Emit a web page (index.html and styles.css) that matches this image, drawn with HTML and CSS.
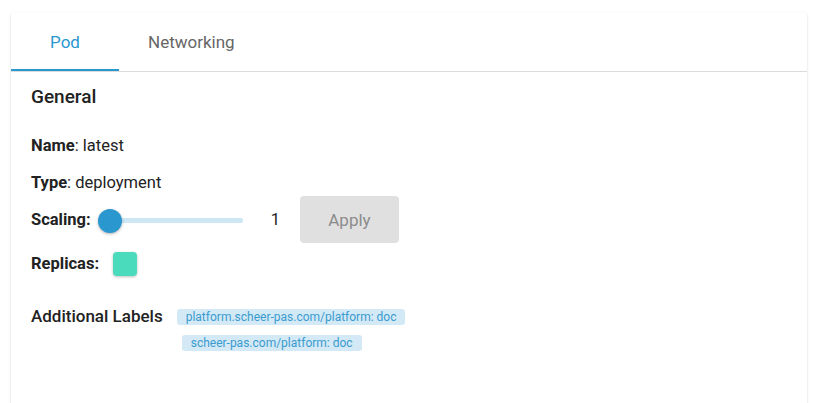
FILE: index.html
```html
<!DOCTYPE html>
<html lang="en">
  <head>
    <meta charset="UTF-8" />
    <meta name="viewport" content="width=device-width, initial-scale=1.0" />
    <title>Pod details</title>
    <link rel="stylesheet" href="styles.css">
  </head>
  <body>
    <div class="card">
      <div class="tabs">
        <div class="tab active">Pod</div>
        <div class="tab">Networking</div>
      </div>

      <div class="content">
        <h2>General</h2>

        <div class="row name-row"><b>Name</b>: latest</div>
        <div class="row type-row"><b>Type</b>: deployment</div>

        <div class="row scaling-row">
          <b>Scaling:</b>
          <div class="slider">
            <div class="track"></div>
            <div class="thumb"></div>
          </div>
          <span class="count">1</span>
          <button type="button" class="apply" disabled>Apply</button>
        </div>

        <div class="row replicas-row">
          <b>Replicas:</b>
          <span class="replica"></span>
        </div>

        <div class="labels-row">
          <span class="labels-title">Additional Labels</span>
          <div class="chips">
            <span class="chip">platform.scheer-pas.com/platform: doc</span>
            <span class="chip second">scheer-pas.com/platform: doc</span>
          </div>
        </div>
      </div>
    </div>
  </body>
</html>
```

FILE: styles.css
```css
* {
  margin: 0;
  padding: 0;
  box-sizing: border-box;
}
body {
  font-family: Roboto, "Liberation Sans", Arial, sans-serif;
  background-color: #fff;
  color: #222;
  padding: 13px 10px 0 11px;
}
.card {
  height: 400px;
  background-color: #fff;
  border-radius: 2px;
  box-shadow: 0 2px 1px -1px rgba(0, 0, 0, 0.2), 0 1px 1px 0 rgba(0, 0, 0, 0.14),
    0 1px 3px 0 rgba(0, 0, 0, 0.12);
}
.tabs {
  display: flex;
  height: 59px;
  border-bottom: 1px solid #dcdcdc;
}
.tab {
  display: flex;
  align-items: center;
  justify-content: center;
  height: 58px;
  padding: 0 29px;
  font-size: 17px;
  color: #666;
}
.tab.active {
  width: 108px;
  color: #2b97cf;
  border-bottom: 2px solid #2b97cf;
  padding-top: 2px;
}
.content {
  padding: 13px 20px 0;
}
h2 {
  font-size: 19px;
  font-weight: 500;
  line-height: 24px;
  color: #222;
}
.row {
  display: flex;
  align-items: center;
  font-size: 16.5px;
  line-height: 24px;
}
b {
  font-weight: 700;
}
.name-row {
  margin-top: 25px;
}
.type-row {
  margin-top: 13px;
}
.scaling-row {
  height: 47px;
  margin-top: 1px;
}
.slider {
  position: relative;
  display: flex;
  align-items: center;
  width: 145px;
  height: 24px;
  margin-left: 7px;
  margin-top: 2px;
  padding-left: 12px;
}
.track {
  width: 100%;
  height: 5px;
  border-radius: 3px;
  background-color: #cde6f4;
}
.thumb {
  position: absolute;
  left: 0;
  top: 0;
  width: 24px;
  height: 24px;
  border-radius: 50%;
  background-color: #2b97cf;
  box-shadow: 0 1px 3px rgba(0, 0, 0, 0.3);
}
.count {
  margin-left: 28px;
}
.apply {
  width: 99px;
  height: 47px;
  margin-left: 20px;
  border: none;
  border-radius: 4px;
  background-color: #e0e0e0;
  color: #8c8c8c;
  font-family: inherit;
  font-size: 17px;
}
.replicas-row {
  margin-top: 9px;
}
.replica {
  width: 24px;
  height: 24px;
  margin-left: 14px;
  border-radius: 4px;
  background-color: #4adbbd;
  box-shadow: 0 1px 3px rgba(0, 0, 0, 0.25);
}
.labels-row {
  display: flex;
  align-items: flex-start;
  margin-top: 32px;
}
.labels-title {
  font-size: 17px;
  font-weight: 500;
  line-height: 16px;
  color: #222;
}
.chips {
  display: flex;
  flex-direction: column;
  align-items: flex-start;
  gap: 10px;
  margin-left: 14px;
  margin-top: 1px;
}
.chip {
  height: 16px;
  padding: 0 9px;
  border-radius: 3px;
  background-color: #d3e9f5;
  color: #3a9bd0;
  font-size: 12px;
  line-height: 16px;
}
.chip.second {
  margin-left: 5px;
}
```
